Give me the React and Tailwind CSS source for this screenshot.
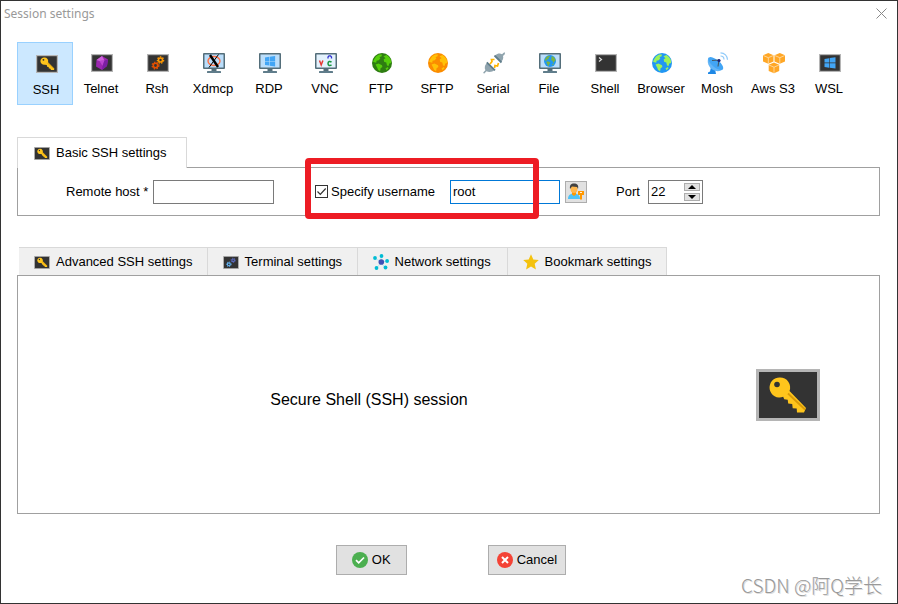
import React, { useState } from "react";

function KeyShape() {
  return (
    <g>
      <path fill="#ffc51c" d="M8 4.500a4.800 4.800 0 0 1 4.600 6.200l8.200 8.100-.3 2.200h-4l-1.200-2-1.700-.1-.3-2-2-.4-.4-2-2.400-.6A4.800 4.800 0 1 1 8 4.500z" />
      <path fill="#d99a08" d="m11.600 12.200.8-.9 7.600 7.500-.2.900z" />
      <circle cx="6.500" cy="7.500" r="1.200" fill="#333" />
    </g>
  );
}

function Terminal({ className, children }) {
  return (
    <svg viewBox="0 0 22 18" className={className} aria-hidden="true">
      <rect width="22" height="18" fill="#b5b5b5" />
      <rect x="1.200" y="1.200" width="19.600" height="15.600" fill="#333" />
      {children}
    </svg>
  );
}

function KeyIcon({ className }) {
  return (
    <Terminal className={className}>
      <g transform="translate(2.500 -.9) scale(.76)"><KeyShape /></g>
    </Terminal>
  );
}

function BigKey() {
  return (
    <svg viewBox="0 0 64 52" className="h-[52px] w-16 shrink-0" aria-label="SSH key">
      <rect width="64" height="52" fill="#b5b5b5" />
      <rect x="3" y="3" width="58" height="46" fill="#333" />
      <path fill="#ffc51c" d="M24 8.500a10 10 0 0 1 9.500 13.500L50 39l-2 4.500h-7l-.3-4-4-.3-.5-4.200-4-.4-.5-3.800-3.500-.5-1-2.500A10 10 0 1 1 24 8.500z" />
      <path d="M32 24.500 49 40.500" stroke="#d99a08" strokeWidth="1.800" />
      <circle cx="21" cy="15.500" r="2.800" fill="#333" />
    </svg>
  );
}

function Gear({ cx, cy, r, color }) {
  return (
    <g fill="none" stroke={color}>
      <circle cx={cx} cy={cy} r={r} strokeWidth="1.600" />
      <circle cx={cx} cy={cy} r={r + 1.200} strokeWidth="1.200" strokeDasharray="1.500 1.300" />
    </g>
  );
}

function Monitor({ children, screen = "#bbdefb" }) {
  return (
    <svg viewBox="0 0 22 20" className="h-5 w-[22px]" aria-hidden="true">
      <rect x="8.500" y="15" width="5" height="3" fill="#546e7a" />
      <rect x="4" y="18" width="14" height="2" rx=".5" fill="#607d8b" />
      <rect x="0" y="0" width="22" height="16" rx="1" fill="#546e7a" />
      <rect x="1.500" y="1.500" width="19" height="13" fill={screen} />
      {children}
    </svg>
  );
}

function Land({ color }) {
  return (
    <g fill={color}>
      <path d="M2 6.500 4 3.500 7 1.400l3 .2-.6 1.900-2 .5 1 1.300-1.600 1.900-2.300.6-.2 2-1.900-.6L1 8.800z" />
      <path d="m3.500 11.500 3-.9 3.500 1.600.4 1.700-1.800 1.400-.5 3-2-1.400-1.100-2.700z" />
      <path d="m11.500 3.200 3-1.200 2.400 2 1.800 2.600.5 3.500-1.900.4-.8 2.500-1.500-.5-.7-3-2.200-.8-.4-2.400 1.800-1z" />
      <path d="m13.500 15.500 2.300-1.400.7 1.100-2 2.100z" />
    </g>
  );
}

function Globe({ sea, land }) {
  return (
    <svg viewBox="0 0 20 20" className="size-5" aria-hidden="true">
      <circle cx="10" cy="10" r="10" fill={sea} />
      <Land color={land} />
    </svg>
  );
}

function WindowsPanes({ transform }) {
  return (
    <path transform={transform} fill="#42a5f5" d="M0 1.600 4.600.9v4.400H0zM5.200.8 11 0v5.300H5.200zM0 6h4.600v4.400L0 9.700zM5.200 6H11v5.300l-5.800-.8z" />
  );
}

function Plug() {
  return (
    <svg viewBox="0 0 22 22" className="size-[22px]" aria-hidden="true">
      <path d="M7 12 9 9.500 8.500 7.500h3M11.500 16l.5-2.500 2.500.5 1-3" fill="none" stroke="#ffb300" strokeWidth="1.700" />
      <path fill="#90a4ae" d="M12.500 3.500C14 1.500 17 1 19 2.200L21.500 0 22 2l-2 2c.8 2-.2 4.500-2.200 6.300z" />
      <path fill="#90a4ae" d="M4.300 10.500 11.500 18c-2 2-5.500 2.500-8 1.200L1 21.800.2 20.500l2.200-2.300C1 15.500 2 12.500 4.300 10.500z" />
      <path d="m11.500 3.500 7 7M3.800 10.300l8.200 8" stroke="#607d8b" strokeWidth="1.800" />
    </svg>
  );
}

function Dish() {
  return (
    <svg viewBox="0 0 22 22" className="size-[22px]" aria-hidden="true">
      <path fill="#1e88e5" d="m4 15 4 2 1 5H1v-1.500l2-1z" />
      <path fill="#64b5f6" d="M1.500 5.500C-1 11 3 18 9 19c3 .5 6-.5 7-2z" />
      <ellipse cx="8.800" cy="11.500" rx="9" ry="3.800" transform="rotate(39 8.800 11.500)" fill="#42a5f5" />
      <path d="M5 8.500 12 8l-1 6.500" fill="none" stroke="#455a64" strokeWidth="1.100" />
      <circle cx="12" cy="8.500" r="1.600" fill="#1a237e" />
      <path d="M13.500 4c2 0 3.500 1.500 3.500 3.500M13.500.8c4 0 7 3 7 7" fill="none" stroke="#90caf9" strokeWidth="1.200" />
    </svg>
  );
}

function Cube({ x, y }) {
  return (
    <g transform={`translate(${x} ${y})`}>
      <path fill="#ffa726" d="m5.300 0 5.200 2.200v6.300l-5.200 2.300L0 8.500V2.200z" />
      <path d="m.3 2.500 5 2.200 5-2.200M5.300 4.700v6" fill="none" stroke="#ffe0b2" strokeWidth=".8" />
    </g>
  );
}

function Person() {
  return (
    <svg viewBox="0 0 18 18" className="size-[18px]" aria-hidden="true">
      <path fill="#4fc3f7" d="M1 16c0-4 2.500-5.500 6-5.500s6 1.500 6 5.500z" />
      <path fill="#ff9800" d="M5 8.500h4v3l-2 1.500-2-1.500z" />
      <ellipse cx="7" cy="6" rx="3.500" ry="4" fill="#ffb74d" />
      <path fill="#424242" d="M3 6C2.500 2 4 .5 7 .5s5 1.500 4 5.500L10 4 5 3.500z" />
      <path fill="#ff9800" d="M11 8h6v4h-2v4.500h-2V12h-2z" />
      <path fill="#fff3e0" d="M13 9h2v1h-2z" />
    </svg>
  );
}

const sessions = [
  { name: "SSH", icon: <KeyIcon className="h-[18px] w-[22px]" /> },
  {
    name: "Telnet",
    icon: (
      <Terminal className="h-[18px] w-[22px]">
        <path fill="#9c27b0" d="m11 2 6 3.500-1 6.500-5 4-6-3.500L5.500 6z" />
        <path fill="#ce62dc" d="m11 2 2.500 4.500-5 .5-3-1z" />
        <path fill="#ba45ce" d="m8.500 7 5-.5-2 5.500z" />
        <path fill="#7b1fa2" d="M13.500 6.500 17 5.500 16 12l-5 4 .5-4z" />
      </Terminal>
    ),
  },
  {
    name: "Rsh",
    icon: (
      <Terminal className="h-[18px] w-[22px]">
        <Gear cx={13.500} cy={6} r={2} color="#ff9800" />
        <Gear cx={8.500} cy={11.500} r={2.200} color="#e65100" />
      </Terminal>
    ),
  },
  {
    name: "Xdmcp",
    icon: (
      <Monitor>
        <ellipse cx="11" cy="8" rx="6" ry="4.500" fill="none" stroke="#ff7043" strokeWidth="1.400" />
        <path d="m7 2 8 12" stroke="#000" strokeWidth="2.400" />
        <path d="M15.500 1.500 6 14.500" stroke="#000" strokeWidth="1" />
      </Monitor>
    ),
  },
  { name: "RDP", icon: <Monitor><WindowsPanes transform="translate(6 3) scale(.92)" /></Monitor> },
  {
    name: "VNC",
    icon: (
      <Monitor screen="#e3f2fd">
        <path d="m4.500 7.500 1.700 4.500 1.700-4.500" fill="none" stroke="#e53935" strokeWidth="1.500" />
        <path d="M13 5.500V4l1-1.200h1.500l1 1.200v1.500" fill="none" stroke="#3030d0" strokeWidth="1.300" />
        <path d="M16.500 9.200c-1.500-1.400-3.500-.7-3.500 1.300s2 2.700 3.500 1.300" fill="none" stroke="#16943b" strokeWidth="1.500" />
      </Monitor>
    ),
  },
  { name: "FTP", icon: <Globe sea="#2e7d12" land="#55ce0b" /> },
  { name: "SFTP", icon: <Globe sea="#fb8c00" land="#ffc107" /> },
  { name: "Serial", icon: <Plug /> },
  {
    name: "File",
    icon: (
      <Monitor>
        <g transform="translate(5 2) scale(.6)">
          <circle cx="10" cy="10" r="10" fill="#2196f3" />
          <Land color="#7cb342" />
        </g>
      </Monitor>
    ),
  },
  {
    name: "Shell",
    icon: (
      <Terminal className="h-[18px] w-[22px]">
        <path d="m4 3.500 2.500 2L4 7.500" fill="none" stroke="#ddd" strokeWidth="1.200" />
      </Terminal>
    ),
  },
  { name: "Browser", icon: <Globe sea="#2196f3" land="#9cf25a" /> },
  { name: "Mosh", icon: <Dish /> },
  {
    name: "Aws S3",
    icon: (
      <svg viewBox="0 0 22 21" className="h-[21px] w-[22px]" aria-hidden="true">
        <Cube x={0} y={0} />
        <Cube x={11.500} y={0} />
        <Cube x={5.700} y={9.500} />
      </svg>
    ),
  },
  {
    name: "WSL",
    icon: (
      <Terminal className="h-[18px] w-[22px]">
        <WindowsPanes transform="translate(5.500 3.300)" />
      </Terminal>
    ),
  },
];

const tabs = [
  { name: "Advanced SSH settings", icon: <KeyIcon className="h-[13px] w-4" /> },
  {
    name: "Terminal settings",
    icon: (
      <Terminal className="h-[13px] w-4">
        <Gear cx={14} cy={6} r={1.800} color="#5c6bc0" />
        <Gear cx={8} cy={11.500} r={2} color="#64b5f6" />
      </Terminal>
    ),
  },
  {
    name: "Network settings",
    icon: (
      <svg viewBox="0 0 16 16" className="size-4" aria-hidden="true">
        <path d="M8 8V2M8 8 2 4M8 8l6-1M8 8l-4 6M8 8l4 6" stroke="#b2ebf2" />
        <g fill="#00bcd4">
          <circle cx="8.500" cy="2" r="1.900" />
          <circle cx="2" cy="4" r="1.900" />
          <circle cx="14.100" cy="7" r="1.900" />
          <circle cx="3.500" cy="14" r="1.900" />
          <circle cx="12.500" cy="13.500" r="1.900" />
        </g>
        <circle cx="8.300" cy="8" r="2.800" fill="#3f51b5" />
      </svg>
    ),
  },
  {
    name: "Bookmark settings",
    icon: (
      <svg viewBox="0 0 16 16" className="size-4" aria-hidden="true">
        <path fill="#f4c20d" d="m8 .3 2.300 5.100 5.500.6-4.100 3.800 1.200 5.600L8 12.600l-4.900 2.800 1.200-5.600L.2 6l5.500-.6z" />
      </svg>
    ),
  },
];

export default function App() {
  const [session, setSession] = useState("SSH");
  const [specify, setSpecify] = useState(true);
  const [host, setHost] = useState("");
  const [user, setUser] = useState("root");
  const [port, setPort] = useState(22);

  return (
    <div className="relative flex min-h-screen flex-col border border-[#333] bg-white font-['Liberation_Sans',Arial,sans-serif] text-[13px] leading-4 text-black">
      <header className="flex h-[25px] items-center justify-between pr-2.5 pl-[3px]">
        <h1 className="font-['Noto_Sans',sans-serif] text-xs text-[#999]">Session settings</h1>
        <button aria-label="Close" className="size-[11px]">
          <svg viewBox="0 0 11 11" className="size-[11px]">
            <path d="m.5.500 10 10m0-10-10 10" stroke="#888" />
          </svg>
        </button>
      </header>

      <main className="flex flex-1 flex-col pt-4 pr-[17px] pb-7 pl-4">
        <nav className="flex" aria-label="Session type">
          {sessions.map((s) => (
            <button
              key={s.name}
              onClick={() => setSession(s.name)}
              className={`flex h-[63px] w-14 flex-col items-center border ${
                session === s.name ? "border-[#99d1ff] bg-[#cce8ff] pt-2.5 pl-0.5" : "border-transparent pt-[9px]"
              }`}
            >
              <span className="flex h-[22px] items-center pl-0.5">{s.icon}</span>
              <span className="mt-[7px] whitespace-nowrap">{s.name}</span>
            </button>
          ))}
        </nav>

        <section className="mt-8">
          <div className="relative z-10 -mb-px flex">
            <button className="flex h-[31px] items-center gap-1.5 border border-b-0 border-[#d9d9d9] bg-white pr-[19px] pl-4">
              <KeyIcon className="h-[13px] w-4" />
              Basic SSH settings
            </button>
          </div>
          <div className="flex h-[49px] items-center border border-[#a0a0a0] pl-12">
            <label htmlFor="host" className="w-[87px] whitespace-nowrap">Remote host *</label>
            <input
              id="host"
              value={host}
              onChange={(e) => setHost(e.target.value)}
              className="h-6 w-[121px] border border-[#7a7a7a] px-0.5 outline-none"
            />
            <div className="relative ml-[41px] flex items-center">
              <label className="flex w-[135px] items-center gap-[3px] whitespace-nowrap">
                <span className="grid size-[13px] place-items-center">
                  <input
                    type="checkbox"
                    checked={specify}
                    onChange={(e) => setSpecify(e.target.checked)}
                    className="col-start-1 row-start-1 size-[13px] appearance-none border border-[#333]"
                  />
                  {specify && (
                    <svg viewBox="0 0 13 13" className="pointer-events-none col-start-1 row-start-1 size-[13px]">
                      <path d="m2.500 6.500 2.800 2.800L10.700 3.500" fill="none" stroke="#333" strokeWidth="1.200" />
                    </svg>
                  )}
                </span>
                Specify username
              </label>
              <input
                aria-label="Username"
                value={user}
                onChange={(e) => setUser(e.target.value)}
                className="h-6 w-[110px] border border-[#0078d7] px-0.5 outline-none"
              />
              <div className="pointer-events-none absolute -top-[22px] right-[21px] -bottom-[15px] -left-2.5 rounded border-6 border-[#ed1c24]" />
            </div>
            <button aria-label="User accounts" className="ml-[5px] flex size-[22px] items-center justify-center border border-[#adadad] bg-[#e1e1e1]">
              <Person />
            </button>
            <label htmlFor="port" className="ml-[29px] w-8">Port</label>
            <div className="flex h-6 w-[55px] items-center justify-between border border-[#7a7a7a] pr-0.5">
              <input
                id="port"
                value={port}
                onChange={(e) => setPort(Number(e.target.value) || 0)}
                className="w-8 pl-0.5 outline-none"
              />
              <div className="flex flex-col gap-0.5">
                <button aria-label="Increase port" onClick={() => setPort(port + 1)} className="flex h-2 w-4 items-center justify-center border border-[#adadad] bg-[#e1e1e1]">
                  <svg viewBox="0 0 8 4" className="h-1 w-2"><path d="M4 0 8 4H0z" /></svg>
                </button>
                <button aria-label="Decrease port" onClick={() => setPort(port - 1)} className="flex h-2 w-4 items-center justify-center border border-[#adadad] bg-[#e1e1e1]">
                  <svg viewBox="0 0 8 4" className="h-1 w-2"><path d="M4 4 8 0H0z" /></svg>
                </button>
              </div>
            </div>
          </div>
        </section>

        <section className="mt-[31px] flex flex-1 flex-col">
          <div className="flex pl-0.5">
            <div className="flex divide-x divide-[#d9d9d9] border-t border-r border-[#d9d9d9] bg-[#f0f0f0]">
              {tabs.map((t) => (
                <button key={t.name} className="flex h-[27px] min-w-[150px] items-center gap-1.5 pt-px pr-3.5 pl-[15px] whitespace-nowrap">
                  {t.icon}
                  {t.name}
                </button>
              ))}
            </div>
          </div>
          <div className="flex flex-1 items-center gap-9 border border-[#a0a0a0] pr-[59px]">
            <p className="flex-1 pt-2.5 text-center text-base">Secure Shell (SSH) session</p>
            <BigKey />
          </div>
        </section>

        <footer className="mt-[31px] flex justify-center gap-[81px] pl-[5px]">
          <button className="flex h-[30px] items-center gap-1 border border-[#adadad] bg-[#e1e1e1] px-[15px]">
            <svg viewBox="0 0 16 16" className="size-4" aria-hidden="true">
              <circle cx="8" cy="8" r="8" fill="#4caf50" />
              <path d="m4 8.200 2.700 2.700L12 5.500" fill="none" stroke="#fff" strokeWidth="1.700" />
            </svg>
            OK
          </button>
          <button className="flex h-[30px] items-center gap-1 border border-[#adadad] bg-[#e1e1e1] px-2">
            <svg viewBox="0 0 16 16" className="size-4" aria-hidden="true">
              <circle cx="8" cy="8" r="8" fill="#f44336" />
              <path d="m5 5 6 6m0-6-6 6" stroke="#fff" strokeWidth="2" />
            </svg>
            Cancel
          </button>
        </footer>
      </main>

      <div className="pointer-events-none absolute right-[15px] bottom-1.5 font-['Noto_Sans_CJK_SC',sans-serif] text-[19px] leading-6 font-light text-[#999] [text-shadow:1px_1px_0_#ddd]">
        CSDN @阿Q学长
      </div>
    </div>
  );
}
